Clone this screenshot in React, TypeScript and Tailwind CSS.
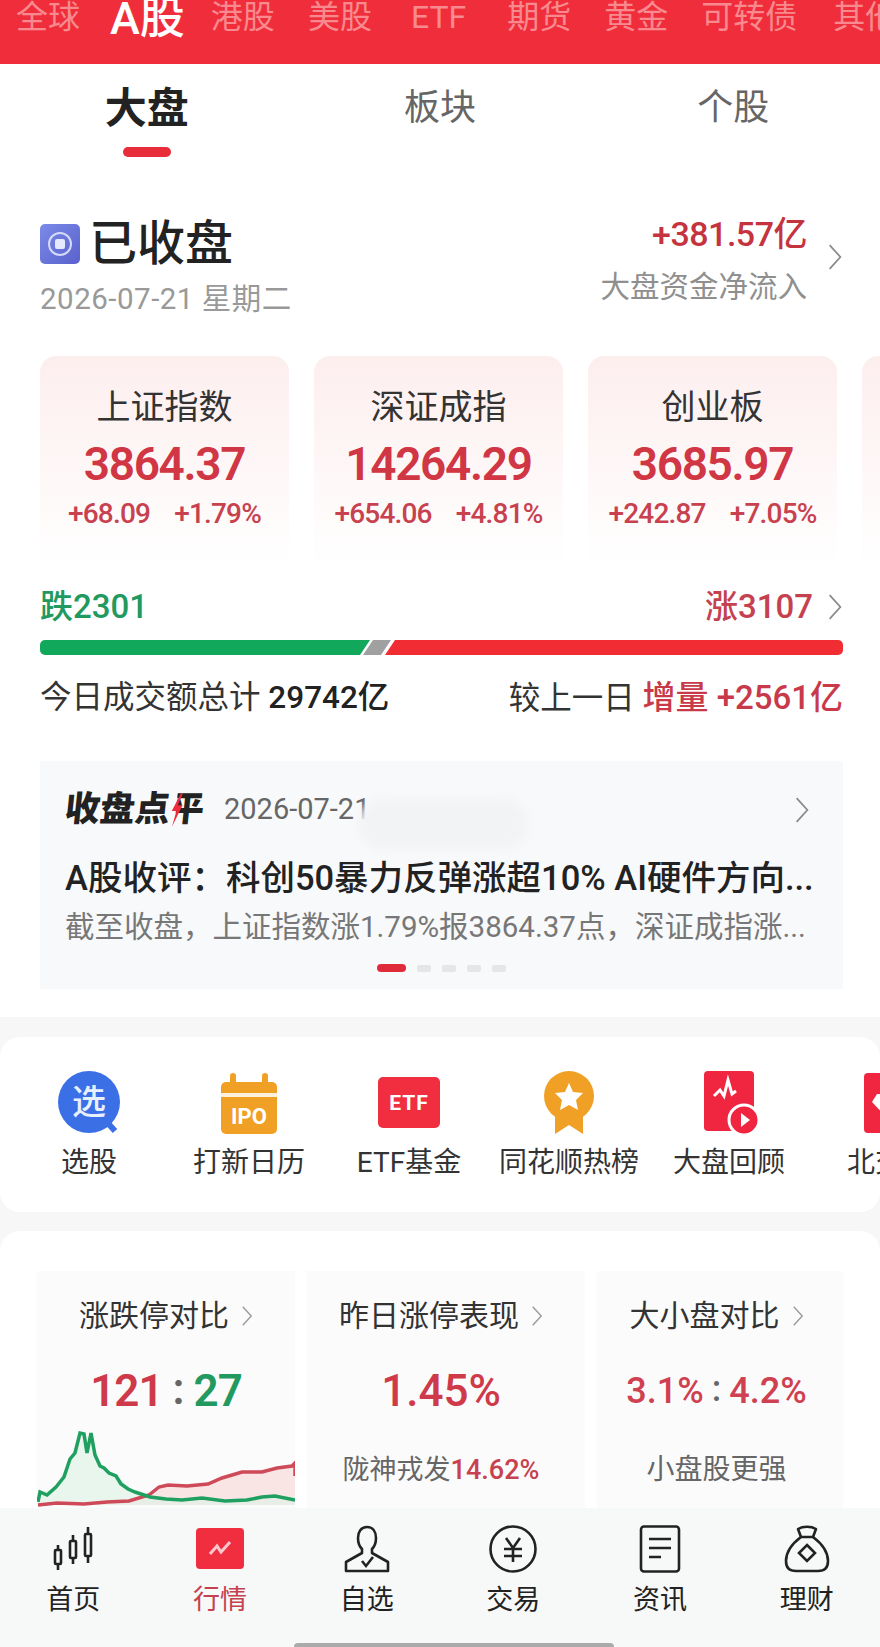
import React from 'react';

const marketTabs = ['全球', 'A股', '港股', '美股', 'ETF', '期货', '黄金', '可转债', '其他'];

const indexCards = [
  { name: '上证指数', value: '3864.37', change: '+68.09', pct: '+1.79%' },
  { name: '深证成指', value: '14264.29', change: '+654.06', pct: '+4.81%' },
  { name: '创业板', value: '3685.97', change: '+242.87', pct: '+7.05%' },
];

const Chevron: React.FC<{ className?: string }> = ({ className }) => (
  <svg viewBox="0 0 14 26" fill="none" className={className}>
    <path d="M2 2l10 11L2 24" stroke="currentColor" strokeWidth="1.6" />
  </svg>
);

const PickIcon = () => (
  <svg viewBox="0 0 64 64" className="w-[64px] h-[64px]">
    <path d="M48 50l10 11" stroke="#3b6fe6" strokeWidth="6" />
    <circle cx="32" cy="32" r="31" fill="#3b6fe6" />
    <text x="32" y="44" textAnchor="middle" fontSize="34" fontWeight="500" fill="#e8efff" fontFamily="Noto Sans CJK SC">选</text>
  </svg>
);

const IpoIcon = () => (
  <svg viewBox="0 0 64 64" className="w-[64px] h-[64px]">
    <rect x="4" y="12" width="56" height="52" rx="5" fill="#f0a024" />
    <rect x="13" y="3" width="6" height="12" rx="3" fill="#f0a024" />
    <rect x="45" y="3" width="6" height="12" rx="3" fill="#f0a024" />
    <rect x="4" y="23" width="56" height="4" fill="#fff" opacity="0.85" />
    <text x="32" y="54" textAnchor="middle" fontSize="22" fontWeight="700" fill="#fff" fontFamily="Roboto">IPO</text>
  </svg>
);

const EtfIcon = () => (
  <svg viewBox="0 0 64 64" className="w-[64px] h-[64px]">
    <rect x="1" y="7" width="62" height="51" rx="5" fill="#f02e40" />
    <text x="32" y="40" textAnchor="middle" fontSize="21" fontWeight="700" letterSpacing="1" fill="#fff" fontFamily="Roboto">ETF</text>
  </svg>
);

const MedalIcon = () => (
  <svg viewBox="0 0 64 64" className="w-[64px] h-[64px]">
    <path d="M18 40v24l14-9 14 9V40z" fill="#f0a024" />
    <circle cx="32" cy="26" r="25" fill="#f0a024" />
    <path d="M32 13l4 9 10 1-7 7 2 10-9-5-9 5 2-10-7-7 10-1z" fill="#fff" />
  </svg>
);

const ReplayIcon = () => (
  <svg viewBox="0 0 64 64" className="w-[64px] h-[64px]">
    <rect x="7" y="1" width="50" height="60" rx="4" fill="#f02640" />
    <path d="M17 26l6-6 4 6 4-16 4 14 4-3" fill="none" stroke="#fff" strokeWidth="3" />
    <circle cx="47" cy="50" r="15" fill="#f02640" stroke="#fff" strokeWidth="3" />
    <path d="M44 43l9 7-9 7z" fill="#fff" />
  </svg>
);

const NorthIcon = () => (
  <svg viewBox="0 0 64 64" className="w-[64px] h-[64px]">
    <rect x="7" y="3" width="50" height="60" rx="4" fill="#f02640" />
    <path d="M20 24h24l5 8-17 18-17-18z" fill="#fff" />
  </svg>
);

const shortcuts = [
  { label: '选股', icon: <PickIcon /> },
  { label: '打新日历', icon: <IpoIcon /> },
  { label: 'ETF基金', icon: <EtfIcon /> },
  { label: '同花顺热榜', icon: <MedalIcon /> },
  { label: '大盘回顾', icon: <ReplayIcon /> },
  { label: '北交所', icon: <NorthIcon /> },
];

const navItems = [
  {
    label: '首页',
    icon: (
      <svg viewBox="0 0 48 48" fill="none" stroke="#222" strokeWidth="2.6" className="w-[48px] h-[48px]">
        <rect x="6" y="25" width="6" height="14" rx="1" />
        <path d="M9 20v5M9 39v6" />
        <rect x="21" y="16" width="6" height="17" rx="1" />
        <path d="M24 10v6M24 33v6" />
        <rect x="36" y="9" width="6" height="22" rx="1" />
        <path d="M39 2v7M39 31v7" />
      </svg>
    ),
  },
  {
    label: '行情',
    active: true,
    icon: (
      <svg viewBox="0 0 48 48" fill="none" className="w-[48px] h-[48px]">
        <rect x="0" y="3" width="48" height="41" rx="4" fill="#f02e40" />
        <path d="M14 29l7-8 4 6 9-10" stroke="#fbc8cd" strokeWidth="3" />
      </svg>
    ),
  },
  {
    label: '自选',
    icon: (
      <svg viewBox="0 0 48 48" fill="none" stroke="#222" strokeWidth="2.6" className="w-[48px] h-[48px]">
        <path d="M24 2c6 0 9 5 9 11 0 5-2 9-4 11v4l16 9v9H3v-9l16-9v-4c-2-2-4-6-4-11 0-6 3-11 9-11z" strokeLinejoin="round" />
        <path d="M19 36l4 5 7-9" />
      </svg>
    ),
  },
  {
    label: '交易',
    icon: (
      <svg viewBox="0 0 48 48" fill="none" stroke="#222" strokeWidth="2.6" className="w-[48px] h-[48px]">
        <circle cx="24" cy="24" r="22.5" />
        <path d="M17 13l7 10 7-10M15 24h18M15 31h18M24 23v14" />
      </svg>
    ),
  },
  {
    label: '资讯',
    icon: (
      <svg viewBox="0 0 48 48" fill="none" stroke="#222" strokeWidth="2.6" className="w-[48px] h-[48px]">
        <rect x="5" y="1.5" width="38" height="45" rx="3" />
        <path d="M13 14h22M13 23h22M13 32h12" />
      </svg>
    ),
  },
  {
    label: '理财',
    icon: (
      <svg viewBox="0 0 48 48" fill="none" stroke="#222" strokeWidth="2.6" className="w-[48px] h-[48px]">
        <path d="M15 4c5-3 13-3 18 0l-3 8H18z" strokeLinejoin="round" />
        <path d="M18 12C10 18 3 27 3 36c0 7 4 10 10 10h22c6 0 10-3 10-10 0-9-7-18-15-24" />
        <path d="M24 20l8 8-8 8-8-8z" />
      </svg>
    ),
  },
];

const greenArea = 'M1 73L4 63L19 58L36 23L46 3L50 23L54 3L63 37L80 47L98 63L129 70L188 72L238 67L258 67V76H1Z';

const LimitChart = () => (
  <svg viewBox="0 0 258 78" className="w-[258px] h-[78px]">
    <path d="M1 76L47 75L92 72L112 66L131 56L171 56L205 43L255 37L258 47V76Z" fill="#f9dcdc" opacity="0.7" />
    <path d={greenArea} fill="#dcf3e6" opacity="0.6" />
    <path
      d="M1 76L20 74L47 75L70 73L92 72L112 66L122 58L131 56L150 57L171 55L185 49L205 43L225 43L240 39L255 37L258 34L258 47"
      fill="none"
      stroke="#cf4a58"
      strokeWidth="3.5"
    />
    <path
      d="M1 73L3 63L10 66L19 58L27 48L33 30L38 24L43 4L47 5L50 24L54 4L58 26L63 37L67 39L72 44L79 47L84 55L91 60L98 63L113 68L129 70L145 71L165 69L188 72L210 71L225 68L238 67L258 71"
      fill="none"
      stroke="#1fa060"
      strokeWidth="3.5"
    />
  </svg>
);

const tabMargin = (t: string) => {
  if (t === 'ETF') return 'ml-[6px] mr-[8px]';
  if (t === '其他') return 'ml-[3px]';
  return '';
};

const App: React.FC = () => {
  return (
    <div className="w-[880px] h-[1647px] overflow-hidden flex flex-col bg-white font-[family-name:Roboto,'Noto_Sans_CJK_SC',sans-serif] text-[#222]">
      {/* market tabs */}
      <div className="h-[64px] shrink-0 bg-[#f02e3b] flex items-start gap-[33px] pl-[16px] overflow-hidden whitespace-nowrap">
        {marketTabs.map((t) =>
          t === 'A股' ? (
            <span key={t} className="shrink-0 -ml-[3px] -mr-[7px] text-[45px] leading-[37px] font-medium text-white">
              {t}
            </span>
          ) : (
            <span key={t} className={`shrink-0 text-[32px] leading-[34px] text-[#f88a8f] ${tabMargin(t)}`}>
              {t}
            </span>
          ),
        )}
      </div>

      {/* sub tabs */}
      <div className="grid grid-cols-3 h-[100px] shrink-0">
        <div className="flex flex-col items-center pt-[20px]">
          <span className="text-[42px] leading-[50px] font-bold text-[#222]">大盘</span>
          <span className="mt-[13px] w-[48px] h-[10px] rounded-full bg-[#e82c3a]" />
        </div>
        <div className="flex justify-center pt-[21px] text-[36px] leading-[46px] text-[#666]">板块</div>
        <div className="flex justify-center pt-[21px] text-[36px] leading-[46px] text-[#666]">个股</div>
      </div>

      {/* status */}
      <div className="flex justify-between px-[40px] mt-[50px] h-[100px] shrink-0">
        <div>
          <div className="flex items-center gap-[9px] h-[60px]">
            <div className="w-[40px] h-[40px] rounded-[5px] bg-gradient-to-br from-[#7b8ae8] to-[#5a62cc] flex items-center justify-center">
              <div className="w-[24px] h-[24px] rounded-full border-2 border-[#d6dafa] flex items-center justify-center">
                <div className="w-[10px] h-[10px] rounded-[2px] bg-[#e6e8fc]" />
              </div>
            </div>
            <span className="text-[48px] leading-[60px] font-medium">已收盘</span>
          </div>
          <div className="mt-[7px] text-[29.5px] leading-[36px] text-[#999] tracking-[0.5px]">2026-07-21 星期二</div>
        </div>
        <div className="flex items-start gap-[20px] -mr-[3px]">
          <div className="text-right">
            <div className="text-[34px] leading-[40px] font-medium tracking-[-0.5px] text-[#c5333f]">+381.57亿</div>
            <div className="mt-[14px] text-[29.5px] leading-[38px] text-[#8f8f8f]">大盘资金净流入</div>
          </div>
          <Chevron className="w-[16px] h-[28px] text-[#8a8a8a] mt-[29px]" />
        </div>
      </div>

      {/* index cards */}
      <div className="flex gap-[25px] pl-[40px] mt-[42px] h-[212px] shrink-0 overflow-hidden">
        {indexCards.map((c) => (
          <div
            key={c.name}
            className="w-[249px] shrink-0 rounded-t-[16px] bg-gradient-to-b from-[#fdeeee] to-white flex flex-col items-center pt-[30px]"
          >
            <div className="text-[34px] leading-[42px] text-[#333]">{c.name}</div>
            <div className="mt-[11px] text-[46px] leading-[50px] font-semibold tracking-[-1.3px] text-[#d03644]">{c.value}</div>
            <div className="mt-[9px] flex gap-[24px] text-[28px] leading-[32px] font-medium tracking-[-0.8px] text-[#c8414f]">
              <span>{c.change}</span>
              <span>{c.pct}</span>
            </div>
          </div>
        ))}
        <div className="w-[249px] shrink-0 rounded-t-[16px] bg-gradient-to-b from-[#fdeeee] to-white" />
      </div>

      {/* rise & fall */}
      <div className="flex justify-between items-center pl-[40px] pr-[37px] h-[44px] mt-[17px] shrink-0 text-[33px] font-medium">
        <span className="text-[#21995f]">跌2301</span>
        <span className="flex items-center gap-[14px] text-[#c5414f]">
          涨3107
          <Chevron className="w-[16px] h-[28px] text-[#8a8a8a]" />
        </span>
      </div>
      <div className="ml-[40px] mr-[37px] mt-[11px] h-[15px] shrink-0 flex rounded-[5px] overflow-hidden">
        <div className="w-[330px] bg-[#12a85c] [clip-path:polygon(0_0,100%_0,calc(100%-10px)_100%,0_100%)]" />
        <div className="w-[28px] -ml-[7px] bg-[#a0a0a0] [clip-path:polygon(10px_0,100%_0,calc(100%-10px)_100%,0_100%)]" />
        <div className="flex-1 -ml-[6px] bg-[#f22c33] [clip-path:polygon(10px_0,100%_0,100%_100%,0_100%)]" />
      </div>
      <div className="flex justify-between items-center pl-[40px] pr-[37px] mt-[23px] h-[40px] shrink-0 text-[31.5px]">
        <span className="text-[#333]">
          今日成交额总计 <span className="font-medium text-[#222]">29742亿</span>
        </span>
        <span className="text-[#333]">
          较上一日 <span className="text-[33px] font-medium text-[#c8394a]">增量 +2561亿</span>
        </span>
      </div>

      {/* closing review */}
      <div className="relative ml-[40px] mr-[37px] mt-[43px] h-[228px] shrink-0 bg-[#f8f9fa] px-[25px] pt-[26px]">
        <div className="flex items-center h-[46px]">
          <span className="flex items-center -skew-x-6 text-[35px] leading-[46px] font-black text-[#222]">
            收盘点
            <svg viewBox="0 0 14 36" className="relative z-10 w-[13px] h-[38px] -mr-[7px]">
              <path d="M10 0L2 19h5L4 36 13 13H8l4-13z" fill="#ee2c3c" />
            </svg>
            <span className="w-[28px] overflow-hidden flex justify-end">平</span>
          </span>
          <span className="ml-[20px] text-[29px] text-[#666]">2026-07-21</span>
          <Chevron className="ml-auto mr-[8px] w-[16px] h-[28px] text-[#8a8a8a]" />
        </div>
        <div className="absolute left-[318px] top-[38px] w-[170px] h-[50px] rounded-full bg-[#f1f3f5] blur-[4px]" />
        <div className="mt-[23px] text-[34.5px] leading-[44px] font-medium whitespace-nowrap text-[#222]">
          A股收评：科创50暴力反弹涨超10% AI硬件方向...
        </div>
        <div className="mt-[7px] text-[29.5px] leading-[40px] whitespace-nowrap text-[#777]">
          截至收盘，上证指数涨1.79%报3864.37点，深证成指涨...
        </div>
        <div className="flex justify-center items-center gap-[11px] mt-[17px]">
          <span className="w-[29px] h-[8px] rounded-full bg-[#e02c3a]" />
          <span className="w-[14px] h-[7px] rounded-[2px] bg-[#e6e6e6]" />
          <span className="w-[14px] h-[7px] rounded-[2px] bg-[#e6e6e6]" />
          <span className="w-[14px] h-[7px] rounded-[2px] bg-[#e6e6e6]" />
          <span className="w-[14px] h-[7px] rounded-[2px] bg-[#e6e6e6]" />
        </div>
      </div>

      {/* rest of the page, grey behind white cards */}
      <div className="flex-1 min-h-0 mt-[28px] bg-[#f7f7f8] pt-[20px] flex flex-col overflow-hidden">
        <div className="h-[175px] shrink-0 rounded-[20px] bg-white flex pl-[9px] pt-[33px] overflow-hidden">
          {shortcuts.map((s) => (
            <div key={s.label} className="w-[160px] shrink-0 flex flex-col items-center">
              {s.icon}
              <span className="mt-[11px] text-[28px] leading-[36px] text-[#333] whitespace-nowrap">{s.label}</span>
            </div>
          ))}
        </div>

        <div className="mt-[19px] flex-1 min-h-0 rounded-t-[20px] bg-white flex gap-[12px] pl-[37px] pr-[37px] pt-[40px] overflow-hidden">
          <div className="w-[258px] shrink-0 bg-[#fbfbfb] flex flex-col items-center pt-[25px]">
            <div className="flex items-center gap-[12px] text-[30px] leading-[40px] text-[#333]">
              涨跌停对比
              <Chevron className="w-[12px] h-[22px] text-[#999]" />
            </div>
            <div className="mt-[30px] h-[50px] flex items-center gap-[10px] text-[44px] leading-[50px] font-semibold tracking-[-1px]">
              <span className="text-[#cf3a4a]">121</span>
              <span className="text-[#666] -mt-[4px]">:</span>
              <span className="text-[#21995f]">27</span>
            </div>
            <div className="mt-[13px]">
              <LimitChart />
            </div>
          </div>
          <div className="w-[278px] shrink-0 bg-[#fbfbfb] flex flex-col items-center pt-[25px] pr-[10px]">
            <div className="flex items-center gap-[12px] text-[30px] leading-[40px] text-[#333]">
              昨日涨停表现
              <Chevron className="w-[12px] h-[22px] text-[#999]" />
            </div>
            <div className="mt-[30px] h-[50px] flex items-center text-[44px] leading-[50px] font-medium text-[#cf3a4a]">
              1.45%
            </div>
            <div className="mt-[36px] text-[27px] leading-[36px] text-[#666] whitespace-nowrap">
              陇神戎发<span className="font-medium text-[#c8414f]">14.62%</span>
            </div>
          </div>
          <div className="w-[246px] shrink-0 bg-[#fbfbfb] flex flex-col items-center pt-[25px] pr-[7px]">
            <div className="flex items-center gap-[12px] text-[30px] leading-[40px] text-[#333]">
              大小盘对比
              <Chevron className="w-[12px] h-[22px] text-[#999]" />
            </div>
            <div className="mt-[30px] h-[50px] flex items-center gap-[8px] text-[36px] leading-[50px] font-medium text-[#cf4050]">
              <span>3.1%</span>
              <span className="text-[#666] -mt-[4px]">:</span>
              <span>4.2%</span>
            </div>
            <div className="mt-[36px] text-[28px] leading-[36px] text-[#666] whitespace-nowrap">小盘股更强</div>
          </div>
        </div>

        {/* bottom nav */}
        <div className="relative h-[139px] shrink-0 bg-[#f7f8f8] grid grid-cols-6 pt-[17px]">
          {navItems.map((n) => (
            <div key={n.label} className="flex flex-col items-center">
              {n.icon}
              <span className={`mt-[9px] text-[27px] leading-[36px] ${n.active ? 'text-[#c5414f]' : 'text-[#222]'}`}>
                {n.label}
              </span>
            </div>
          ))}
          <div className="absolute left-[294px] bottom-0 w-[320px] h-[4px] rounded-t-full bg-[#aaaaaa]" />
        </div>
      </div>
    </div>
  );
};

export default App;
